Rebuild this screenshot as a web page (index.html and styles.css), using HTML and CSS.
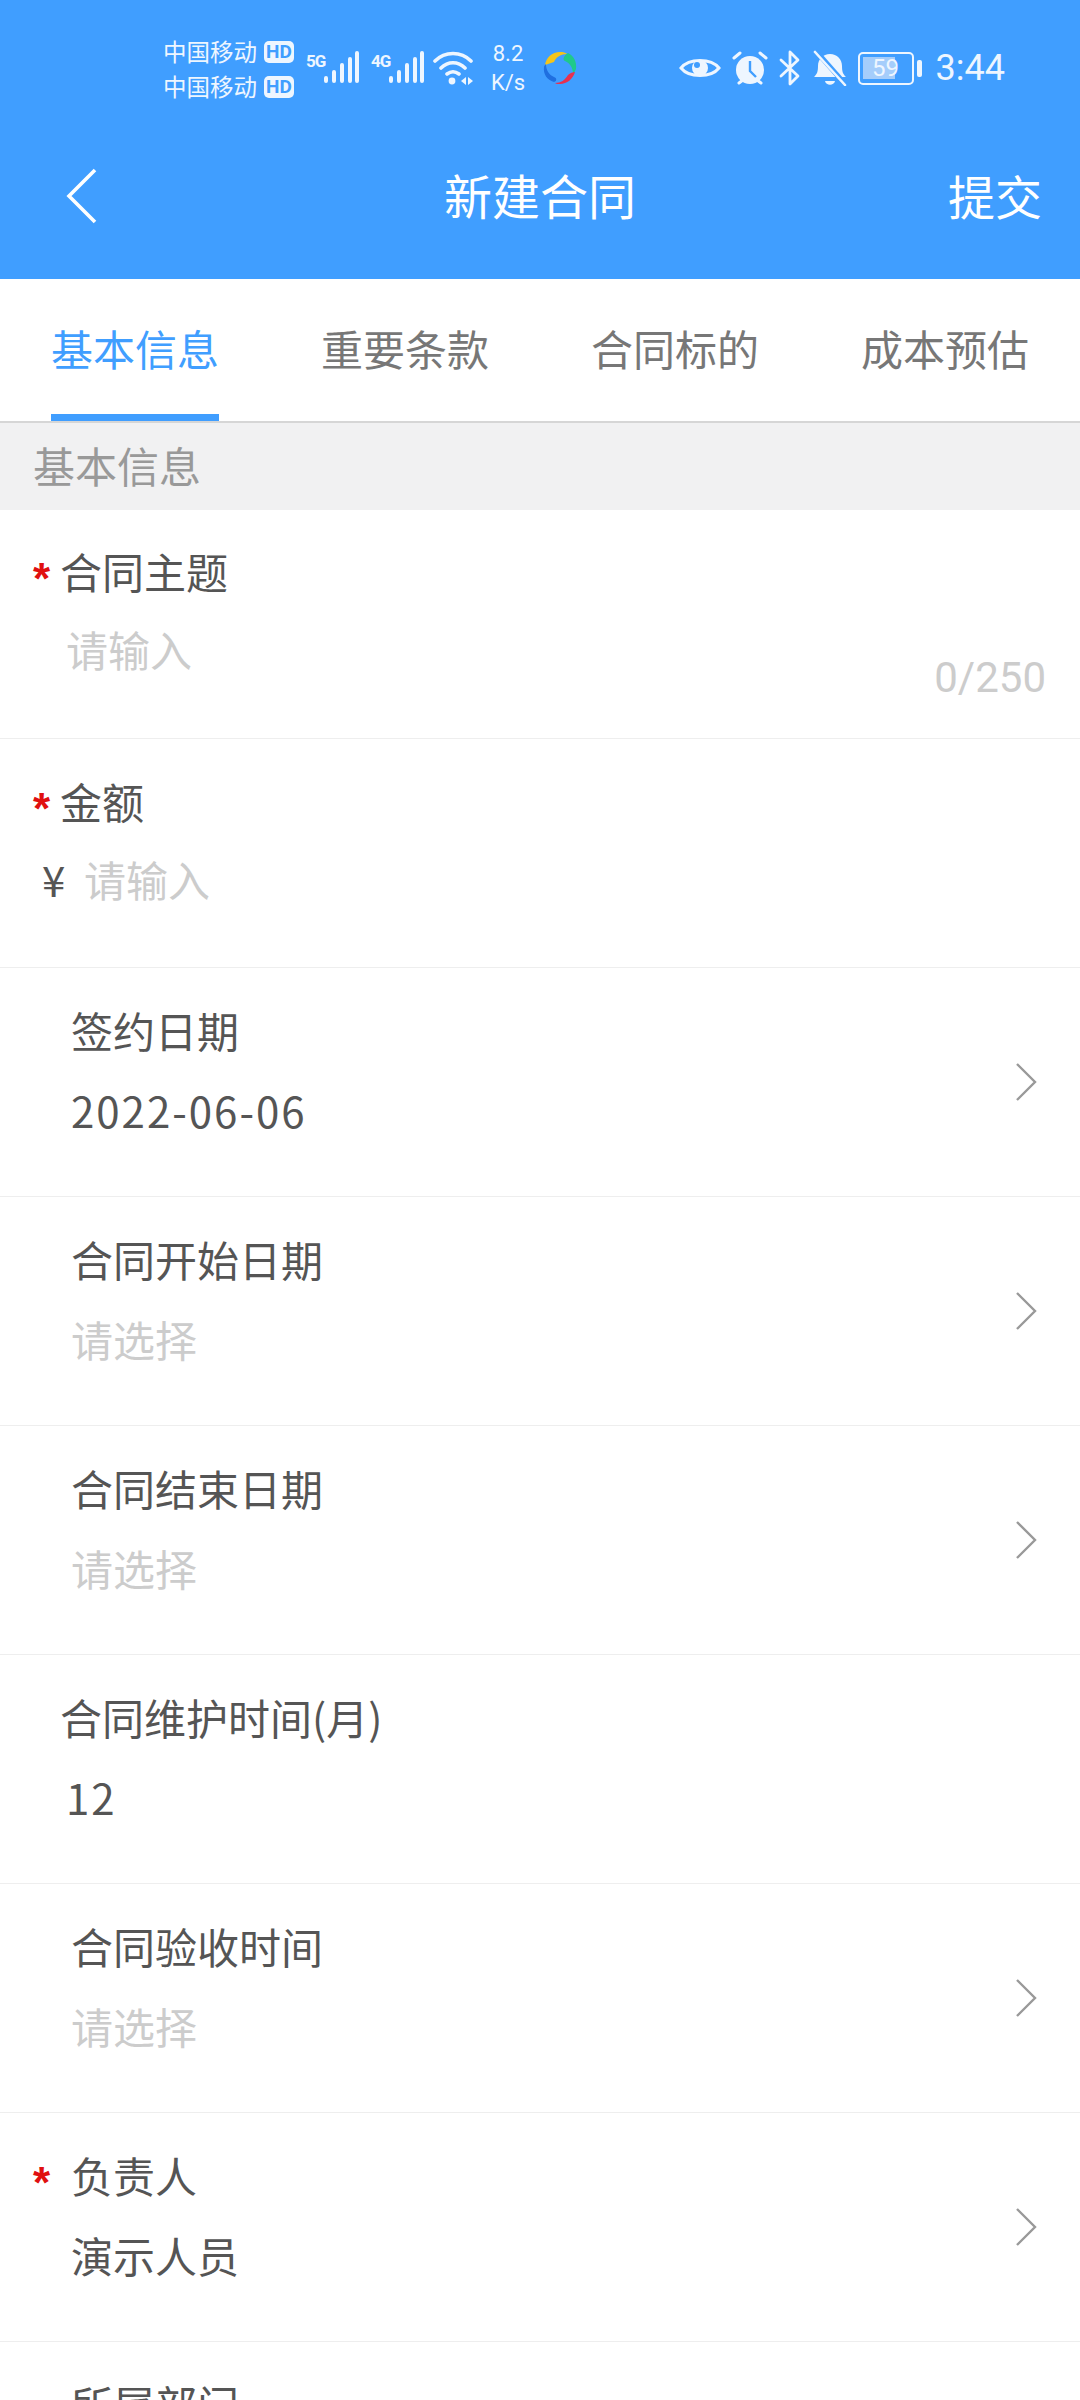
FILE: index.html
```html
<!DOCTYPE html>
<html lang="zh-CN">
<head>
    <meta charset="UTF-8">
    <meta name="viewport" content="width=device-width, initial-scale=1.0">
    <title>新建合同</title>
    <link rel="stylesheet" href="styles.css">
</head>
<body>

    <header class="top">
        <div class="status">
            <div class="status-left">
                <div class="carriers">
                    <div class="carrier">中国移动<span class="hd">HD</span></div>
                    <div class="carrier">中国移动<span class="hd">HD</span></div>
                </div>
                <div class="net">
                    <span class="net-type">5G</span>
                    <svg class="bars" viewBox="0 0 36 32"><path d="M3 27v3M11 21v9M19 14v16M27 8v22M34 2v28"/></svg>
                </div>
                <div class="net">
                    <span class="net-type">4G</span>
                    <svg class="bars" viewBox="0 0 36 32"><path d="M3 27v3M11 21v9M19 14v16M27 8v22M34 2v28"/></svg>
                </div>
                <svg class="wifi" viewBox="0 0 42 36">
                    <path d="M2 11C12 1 28 1 38 11M8 18c7-7 17-7 24 0M14 24c4-3 8-3 12 0" fill="none" stroke="#eef6ff" stroke-width="3.6" stroke-linecap="round"/>
                    <circle cx="19" cy="31" r="3.4" fill="#eef6ff"/>
                    <path d="M28 31l5-4v8zM35 27l5 4-5 4z" fill="#eef6ff"/>
                </svg>
                <div class="speed"><span>8.2</span><span>K/s</span></div>
                <svg class="logo" viewBox="0 0 36 36">
                    <path d="M3 15C4 7 11 1 20 2c2 0 4 1 5 2-6 0-11 3-13 8z" fill="#f5c518"/>
                    <path d="M26 3c6 3 9 9 8 16-1 2-2 4-3 5 0-6-3-11-8-13-3-1-1-6 3-8z" fill="#1fc98b"/>
                    <path d="M33 22c-2 7-8 12-15 12-2 0-4 0-5-1 6 0 10-3 13-8 2-2 5-3 7-3z" fill="#e8304f"/>
                    <path d="M12 32C5 30 1 24 2 17c0-1 1-2 2-3 0 6 3 11 8 13 3 1 3 4 0 5z" fill="#1f6fe0"/>
                </svg>
            </div>
            <div class="status-right">
                <svg class="eye" viewBox="0 0 42 26">
                    <path d="M2 13C10 3 32 3 40 13 32 23 10 23 2 13z" fill="none" stroke="#eef6ff" stroke-width="3"/>
                    <circle cx="21" cy="13" r="8" fill="#eef6ff"/>
                    <circle cx="18" cy="10" r="3" fill="#409eff"/>
                </svg>
                <svg class="alarm" viewBox="0 0 36 36">
                    <circle cx="18" cy="20" r="14" fill="#eef6ff"/>
                    <path d="M18 11v10l6 6" fill="none" stroke="#409eff" stroke-width="2.4"/>
                    <path d="M2 8l6-5M34 8l-6-5M7 33l4-3M29 33l-4-3" fill="none" stroke="#eef6ff" stroke-width="3" stroke-linecap="round"/>
                </svg>
                <svg class="bt" viewBox="0 0 22 36">
                    <path d="M2 10l17 16-8 8V2l8 8L2 26" fill="none" stroke="#eef6ff" stroke-width="2.8" stroke-linecap="round" stroke-linejoin="round"/>
                </svg>
                <svg class="bell" viewBox="0 0 34 36">
                    <path d="M1 27c3-3 4-5 4-11C5 9 10 4 17 4s12 5 12 12c0 6 1 8 4 11z" fill="#eef6ff"/>
                    <path d="M12 31h10c-1 5-9 5-10 0z" fill="#eef6ff"/>
                    <path d="M3 1l29 33" stroke="#409eff" stroke-width="5"/>
                    <path d="M2 2l30 33" stroke="#eef6ff" stroke-width="2.6" stroke-linecap="round"/>
                </svg>
                <div class="battery-wrap">
                    <div class="battery">59</div>
                    <span class="battery-cap"></span>
                </div>
                <span class="clock">3:44</span>
            </div>
        </div>

        <nav class="toolbar">
            <svg class="back" viewBox="0 0 32 56"><path d="M29 2L3 28l26 26" fill="none" stroke="#fff" stroke-width="3.6"/></svg>
            <h1 class="toolbar-title">新建合同</h1>
            <span class="toolbar-action">提交</span>
        </nav>
    </header>

    <div class="tabs">
        <div class="tab tab-active"><span class="tab-text">基本信息</span></div>
        <div class="tab"><span class="tab-text">重要条款</span></div>
        <div class="tab"><span class="tab-text">合同标的</span></div>
        <div class="tab"><span class="tab-text">成本预估</span></div>
    </div>

    <div class="section-title">基本信息</div>

    <main class="form">
        <div class="field field-first">
            <div class="field-body">
                <div class="label label-tight"><span class="star">*</span>合同主题</div>
                <div class="value-line">
                    <span class="value placeholder indent-input">请输入</span>
                    <span class="counter">0/250</span>
                </div>
            </div>
        </div>

        <div class="field">
            <div class="field-body">
                <div class="label label-tight"><span class="star">*</span>金额</div>
                <div class="value-line">
                    <span class="value yen">¥</span>
                    <span class="value placeholder">请输入</span>
                </div>
            </div>
        </div>

        <div class="field">
            <div class="field-body">
                <div class="label label-plain">签约日期</div>
                <div class="value value-plain date">2022-06-06</div>
            </div>
            <svg class="chevron" viewBox="0 0 22 40"><path d="M2 2l18 18L2 38"/></svg>
        </div>

        <div class="field">
            <div class="field-body">
                <div class="label label-plain">合同开始日期</div>
                <div class="value value-plain placeholder">请选择</div>
            </div>
            <svg class="chevron" viewBox="0 0 22 40"><path d="M2 2l18 18L2 38"/></svg>
        </div>

        <div class="field">
            <div class="field-body">
                <div class="label label-plain">合同结束日期</div>
                <div class="value value-plain placeholder">请选择</div>
            </div>
            <svg class="chevron" viewBox="0 0 22 40"><path d="M2 2l18 18L2 38"/></svg>
        </div>

        <div class="field">
            <div class="field-body">
                <div class="label label-num">合同维护时间(月)</div>
                <div class="value indent-input date">12</div>
            </div>
        </div>

        <div class="field">
            <div class="field-body">
                <div class="label label-plain">合同验收时间</div>
                <div class="value value-plain placeholder">请选择</div>
            </div>
            <svg class="chevron" viewBox="0 0 22 40"><path d="M2 2l18 18L2 38"/></svg>
        </div>

        <div class="field">
            <div class="field-body">
                <div class="label label-wide"><span class="star">*</span>负责人</div>
                <div class="value value-plain">演示人员</div>
            </div>
            <svg class="chevron" viewBox="0 0 22 40"><path d="M2 2l18 18L2 38"/></svg>
        </div>

        <div class="field">
            <div class="field-body">
                <div class="label label-plain">所属部门</div>
            </div>
        </div>
    </main>

</body>
</html>
```

FILE: styles.css
```css
html, body {
    margin: 0;
    height: 2400px;
    overflow: hidden;
}
body {
    font-family: "Noto Sans CJK SC", "Noto Sans", sans-serif;
    background: #fff;
    color: #555;
}

/* status bar + toolbar */
.top {
    background-color: #409eff;
    height: 279px;
    color: #fff;
}
.status {
    height: 88px;
    padding: 24px 75px 0 163px;
    display: flex;
    justify-content: space-between;
    align-items: center;
    color: #eef6ff;
}
.status-left, .status-right {
    display: flex;
    align-items: center;
}
.carriers {
    width: 143px;
    margin-top: 2px;
}
.carrier {
    display: flex;
    align-items: center;
    font-size: 23.5px;
    line-height: 35px;
}
.hd {
    margin-left: 7px;
    width: 30px;
    height: 22px;
    border-radius: 5px;
    background: #eef6ff;
    color: #409eff;
    font: bold 19px/22px "Roboto", sans-serif;
    text-align: center;
}
.net {
    display: flex;
    align-items: flex-end;
    margin-top: -2px;
}
.net + .net {
    margin-left: 12px;
}
.net-type {
    width: 17px;
    margin-bottom: 12px;
    font: bold 17px/20px "Roboto", sans-serif;
    letter-spacing: -1px;
}
.bars {
    width: 36px;
    height: 32px;
    fill: none;
    stroke: #eef6ff;
    stroke-width: 4;
    stroke-linecap: round;
}
.wifi {
    width: 42px;
    height: 36px;
    margin-left: 9px;
}
.speed {
    width: 50px;
    margin-left: 8px;
    display: flex;
    flex-direction: column;
    align-items: center;
    font: 22px/29px "Roboto", sans-serif;
}
.logo {
    width: 36px;
    height: 36px;
    margin-left: 9px;
}
.eye {
    width: 42px;
    height: 26px;
}
.alarm {
    width: 36px;
    height: 36px;
    margin-left: 11px;
}
.bt {
    width: 22px;
    height: 36px;
    margin-left: 11px;
}
.bell {
    width: 34px;
    height: 36px;
    margin-left: 12px;
}
.battery-wrap {
    display: flex;
    align-items: center;
    margin-left: 11px;
}
.battery {
    box-sizing: border-box;
    width: 56px;
    height: 33px;
    border: 2.5px solid #eef6ff;
    border-radius: 5px;
    background: linear-gradient(#a5cdfb, #a5cdfb) 3px 3px / 32px 22px no-repeat;
    font: 24px/28px "Roboto", sans-serif;
    text-align: center;
}
.battery-cap {
    width: 5px;
    height: 17px;
    margin-left: 3px;
    border-radius: 2px;
    background: #eef6ff;
}
.clock {
    margin-left: 14px;
    font: 36px/44px "Roboto", sans-serif;
}

.toolbar {
    height: 167px;
    padding: 0 38px 0 66px;
    display: flex;
    align-items: center;
    justify-content: space-between;
}
.back {
    width: 32px;
    height: 56px;
}
.toolbar-title {
    margin: -3px 0 0 34px;
    font-size: 48px;
    font-weight: 400;
}
.toolbar-action {
    margin-top: -3px;
    font-size: 47px;
}

/* tabs */
.tabs {
    display: flex;
    height: 142px;
    border-bottom: 2px solid #d6d6d6;
}
.tab {
    flex: 1;
    display: flex;
    justify-content: center;
    font-size: 42px;
    line-height: 138px;
    color: #777;
}
.tab-text {
    display: block;
    width: 168px;
    height: 142px;
    text-align: center;
}
.tab-active {
    color: #409eff;
}
.tab-active .tab-text {
    box-sizing: border-box;
    border-bottom: 7px solid #409eff;
}

.section-title {
    height: 87px;
    padding-left: 33px;
    background: #f1f1f2;
    color: #999;
    font-size: 42px;
    line-height: 84px;
}

/* form rows */
.field {
    box-sizing: border-box;
    height: 229px;
    padding: 37px 43px 0 0;
    display: flex;
    align-items: flex-start;
    border-bottom: 1px solid #eee;
}
.field-first {
    padding-top: 36px;
}
.field-body {
    flex: 1;
}
.label, .value {
    font-size: 42px;
    line-height: 50px;
}
.label {
    height: 50px;
    margin-bottom: 30px;
}
.label-tight {
    padding-left: 33px;
}
.label-plain {
    padding-left: 71px;
}
.label-num {
    padding-left: 60px;
}
.label-wide {
    padding-left: 33px;
}
.star {
    display: inline-block;
    width: 27px;
    color: #e01010;
    font-family: "Liberation Sans", sans-serif;
    font-size: 44px;
    font-weight: bold;
    vertical-align: -5px;
}
.label-wide .star {
    width: 38px;
}
.value-line {
    display: flex;
    align-items: flex-start;
    margin-top: -2px;
}
.value-plain {
    padding-left: 71px;
}
.indent-input {
    padding-left: 66px;
}
.placeholder {
    color: #ccc;
}
.date {
    letter-spacing: 2px;
}
.yen {
    width: 84px;
    padding-left: 42px;
    box-sizing: border-box;
}
.counter {
    margin: 29px -9px 0 auto;
    color: #ccc;
    font: 42px/50px "Roboto", sans-serif;
}
.chevron {
    width: 22px;
    height: 40px;
    align-self: center;
    margin-top: -37px;
    fill: none;
    stroke: #999;
    stroke-width: 2.4;
}
```
